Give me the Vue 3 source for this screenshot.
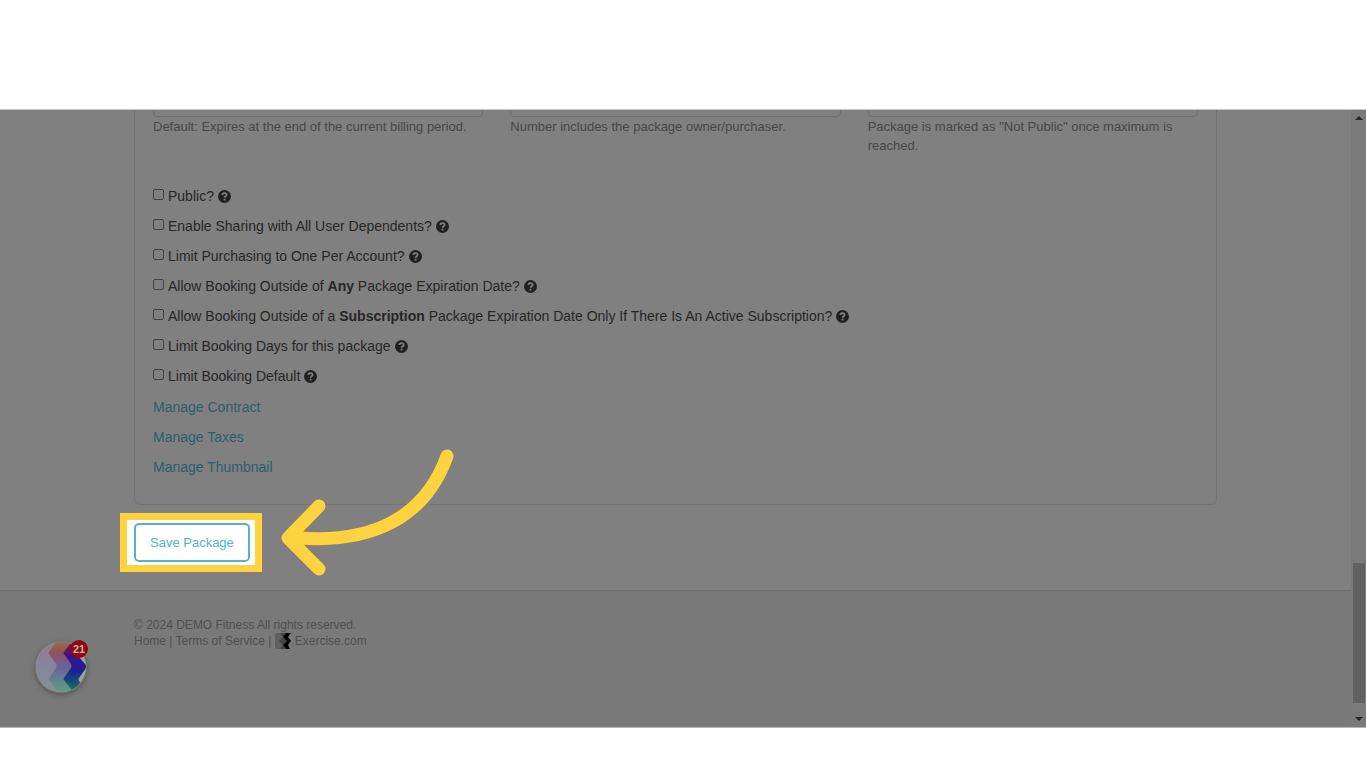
<script setup>
import { ref } from 'vue'

const fields = ref([
  { id: 'expires', label: 'Expires', help: 'Default: Expires at the end of the current billing period.' },
  { id: 'members', label: 'Members', help: 'Number includes the package owner/purchaser.' },
  { id: 'maximum', label: 'Maximum', help: 'Package is marked as "Not Public" once maximum is reached.' }
])

const options = ref([
  { id: 'public', text: 'Public?' },
  { id: 'sharing', text: 'Enable Sharing with All User Dependents?' },
  { id: 'limit-one', text: 'Limit Purchasing to One Per Account?' },
  { id: 'outside-any', text: 'Allow Booking Outside of ', bold: 'Any', rest: ' Package Expiration Date?' },
  {
    id: 'outside-sub',
    text: 'Allow Booking Outside of a ',
    bold: 'Subscription',
    rest: ' Package Expiration Date Only If There Is An Active Subscription?'
  },
  { id: 'limit-days', text: 'Limit Booking Days for this package' },
  { id: 'limit-default', text: 'Limit Booking Default' }
])

const links = ['Manage Contract', 'Manage Taxes', 'Manage Thumbnail']
</script>

<template>
  <main class="frame">
    <div class="document">
      <form class="content" @submit.prevent>
        <div class="panel">
          <div class="fields">
            <div v-for="field in fields" :key="field.id" class="field">
              <input :id="field.id" type="text" :aria-label="field.label" />
              <p>{{ field.help }}</p>
            </div>
          </div>

          <div class="options">
            <div v-for="option in options" :key="option.id" class="option">
              <input :id="option.id" type="checkbox" />
              <label :for="option.id">{{ option.text }}<b v-if="option.bold">{{ option.bold }}</b>{{ option.rest }}</label>
              <svg class="help" viewBox="0 0 12 12" aria-hidden="true">
                <circle cx="6" cy="6" r="6" fill="#202020" />
                <path d="M4 4.6C4.1 2.4 8 2.3 8 4.5C8 5.8 6.1 5.7 6.1 7.2" fill="none" stroke="#808080" stroke-width="1.6" />
                <rect x="5.2" y="8.1" width="1.7" height="1.6" fill="#808080" />
              </svg>
            </div>
          </div>

          <nav class="links">
            <a v-for="link in links" :key="link" href="#">{{ link }}</a>
          </nav>
        </div>

        <div class="highlight">
          <button type="submit" class="save">Save Package</button>
        </div>
      </form>

      <footer>
        <p>© 2024 DEMO Fitness All rights reserved.</p>
        <p class="footer-links">
          <a href="#">Home</a> | <a href="#">Terms of Service</a> |
          <svg class="brand" viewBox="0 0 16 16" aria-hidden="true">
            <rect width="13" height="16" rx="2" fill="#606060" />
            <path d="M5 0H12L9 4L12 8L9 12L12 16H5L8 12L4 8L8 4Z" fill="#464646" />
            <path d="M11 0H16L13 4L16 8L13 12L15 16H11L8 12L12 8L8 4Z" fill="#050505" />
          </svg>
          <a href="#">Exercise.com</a>
        </p>
      </footer>

      <svg class="arrow" viewBox="0 0 180 132" aria-hidden="true">
        <path d="M167 12C145 74 92 99 20 94H8M39 62L8 94L39 125" />
      </svg>

      <button type="button" class="launcher" aria-label="Open messages">
        <svg viewBox="0 0 52 52" aria-hidden="true">
          <defs>
            <clipPath id="disc"><circle cx="26" cy="26" r="25" /></clipPath>
            <linearGradient id="pale" x1="0" y1="0" x2="0" y2="1">
              <stop offset="0" stop-color="#94827c" />
              <stop offset="0.4" stop-color="#8982a0" />
              <stop offset="1" stop-color="#7e9494" />
            </linearGradient>
            <linearGradient id="middle" x1="0" y1="0" x2="0" y2="1">
              <stop offset="0" stop-color="#967050" />
              <stop offset="0.2" stop-color="#96505a" />
              <stop offset="0.5" stop-color="#66639a" />
              <stop offset="1" stop-color="#62a080" />
            </linearGradient>
            <linearGradient id="deep" x1="0" y1="0" x2="0" y2="1">
              <stop offset="0" stop-color="#8b1722" />
              <stop offset="0.3" stop-color="#35168a" />
              <stop offset="0.58" stop-color="#201f91" />
              <stop offset="0.95" stop-color="#087a5a" />
            </linearGradient>
          </defs>
          <g clip-path="url(#disc)">
            <rect width="52" height="52" fill="#a0a0a0" />
            <path d="M0 0H34V52H0Z" fill="url(#pale)" />
            <path d="M22 0H40V52H24L14 39Q13 38 14 37L21 27Q22 25 21 23L14 13Q13 12 14 11Z" fill="url(#middle)" />
            <path d="M37 0H46L43 15L51 24Q52 25 51 27L44 37Q43 38 44 40L47 44L40 52H39L29 39Q28 38 29 37L36 27Q37 25 36 23L29 13Q28 12 29 11Z" fill="url(#deep)" />
          </g>
        </svg>
        <span class="count">21</span>
      </button>
    </div>

    <div class="scrollbar" aria-hidden="true">
      <span class="up"></span>
      <span class="thumb"></span>
      <span class="down"></span>
    </div>
  </main>
</template>

<style>
body {
  margin: 0;
  background: #fff;
}
</style>

<style scoped>
.frame {
  display: flex;
  margin-top: 109px;
  overflow: hidden;
  border-top: 1px solid #c4c4c4;
  border-bottom: 1px solid #b4b4b4;
  background: #808080;
  color: #262626;
  font-family: 'Liberation Sans', Arial, sans-serif;
  font-size: 14px;
}

.document {
  position: relative;
  flex: 1;
  min-width: 0;
}

.content {
  padding: 0 134px 18px;
}

.panel {
  margin-top: -28px;
  padding: 0 18px 22px;
  border: 1px solid #747474;
  border-radius: 6px;
}

.fields {
  display: grid;
  grid-template-columns: repeat(3, 1fr);
  gap: 27px;
  margin-bottom: 26px;
}

.field input {
  display: block;
  box-sizing: border-box;
  width: 100%;
  height: 34px;
  border: 1px solid #707070;
  border-radius: 4px;
  background: transparent;
}

.field p {
  margin: 0;
  color: #474747;
  font-size: 13px;
  line-height: 19px;
}

.option {
  display: flex;
  align-items: center;
  height: 30px;
}

.option input {
  appearance: none;
  box-sizing: border-box;
  width: 11px;
  height: 11px;
  margin: 0 4px 4px 0;
  border: 1px solid #414141;
  border-radius: 2px;
}

.help {
  width: 13px;
  height: 13px;
  margin-left: 4px;
}

.links {
  display: flex;
  flex-direction: column;
  align-items: flex-start;
  margin-top: 1px;
}

.links a {
  color: #2b5e6b;
  line-height: 30px;
  text-decoration: none;
}

.highlight {
  width: fit-content;
  margin: 8px 0 0 -14px;
  padding: 3px 5px 3px 7px;
  border: 7px solid #ffd23f;
  background: #fff;
}

.save {
  display: block;
  height: 39px;
  padding: 0 14px;
  border: 2px solid #54b3c8;
  border-radius: 5px;
  background: #fff;
  color: #54b3c8;
  font-family: inherit;
  font-size: 13px;
  cursor: pointer;
}

footer {
  padding: 26px 134px 78px;
  border-top: 1px solid #6e6e6e;
  background: #797979;
  color: #505050;
  font-size: 12px;
  line-height: 16px;
}

footer p {
  margin: 0;
}

footer a {
  color: inherit;
  text-decoration: none;
}

.brand {
  width: 16px;
  height: 16px;
  margin-right: 4px;
  vertical-align: top;
}

.arrow {
  position: absolute;
  top: 334px;
  left: 280px;
  width: 180px;
  height: 132px;
}

.arrow path {
  fill: none;
  stroke: #ffd23f;
  stroke-width: 13;
  stroke-linecap: round;
  stroke-linejoin: round;
}

.launcher {
  position: absolute;
  bottom: 34px;
  left: 35px;
  width: 52px;
  height: 52px;
  padding: 0;
  border: 0;
  border-radius: 50%;
  background: none;
  box-shadow: 0 2px 5px #555;
  cursor: pointer;
}

.launcher svg {
  display: block;
}

.count {
  position: absolute;
  top: -1px;
  right: -1px;
  width: 18px;
  border-radius: 9px;
  background: #920509;
  color: #b8b8b8;
  font-size: 11px;
  font-weight: bold;
  line-height: 18px;
}

.scrollbar {
  display: flex;
  flex-direction: column;
  align-items: center;
  box-sizing: border-box;
  width: 15px;
  padding: 6px 0;
  background: #7a7a7a;
}

.up,
.down {
  border: 4px solid transparent;
}

.up {
  border-top: 0;
  border-bottom: 4px solid #262626;
}

.down {
  border-top: 4px solid #262626;
  border-bottom: 0;
}

.thumb {
  width: 12px;
  height: 140px;
  margin: auto 0 14px;
  background: #616161;
}
</style>
